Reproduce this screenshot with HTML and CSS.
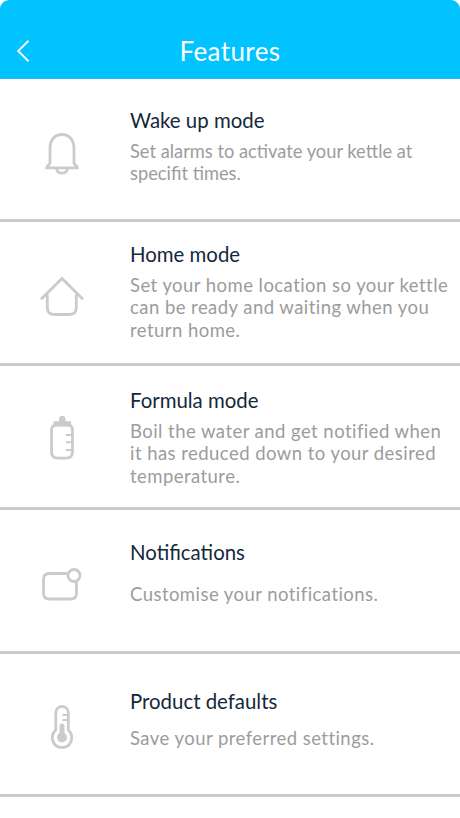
FILE: index.html
```html
<!DOCTYPE html>
<html lang="en">
<head>
<meta charset="utf-8">
<title>Features</title>
<link rel="stylesheet" href="styles.css">
</head>
<body>
<header class="bar">
  <svg class="back" width="14" height="24" viewBox="0 0 14 24"><path d="M12.5 1.8 2.2 12l10.3 10.2"/></svg>
  <h1>Features</h1>
</header>
<main>
  <section class="row wake">
    <svg class="icon" viewBox="0 0 70 70"><path d="M20 43V28c0-8 5-13.500 12-13.500s12 5.500 12 13.500v15c0 2.500 3.300 2 3.300 4.800H16.700c0-2.800 3.300-2.300 3.300-4.800zM26.500 49c1.500 5.600 9.500 5.600 11 0"/></svg>
    <div class="copy"><h2>Wake up mode</h2><p>Set alarms to activate your kettle at<br>specifit times.</p></div>
  </section>
  <section class="row home">
    <svg class="icon" viewBox="0 0 70 70"><path d="M11 34.300 32 13.500 53 34.300M17.300 29.500V42.500q0 7 7 7h15q7 0 7-7V29.500"/></svg>
    <div class="copy"><h2>Home mode</h2><p>Set your home location so your kettle<br>can be ready and waiting when you<br>return home.</p></div>
  </section>
  <section class="row formula">
    <svg class="icon" viewBox="0 0 70 70"><path d="M25 20h14.500q3 1.500 3 5v21.500q0 6.700-6.500 6.700h-8q-6.500 0-6.500-6.700V25q0-3.500 3.500-5z"/><path class="solid" d="M23.500 16.200h5.500v-2c0-4.500 6.500-4.500 6.500 0v2h5.500v5h-17.500z"/><path class="fine" d="M36 30h6M36 37.300h6M36 45h6"/></svg>
    <div class="copy"><h2>Formula mode</h2><p>Boil the water and get notified when<br>it has reduced down to your desired<br>temperature.</p></div>
  </section>
  <section class="row notifications">
    <svg class="icon" viewBox="0 0 70 70"><path d="M38 18.500H19.500q-6 0-6 6v13.500q0 6 6 6h21q6 0 6-6V27"/><circle cx="44" cy="20.500" r="6"/></svg>
    <div class="copy"><h2>Notifications</h2><p>Customise your notifications.</p></div>
  </section>
  <section class="row defaults">
    <svg class="icon" viewBox="0 0 70 70"><path d="M25.800 35V17.500c0-8 12.500-8 12.500 0v17.500c6.500 6 3.200 17.500-6.300 17.500s-12.800-11.500-6.200-17.500z"/><circle class="solid" cx="32" cy="42.500" r="5"/><path class="stem" d="M32 42V31"/><path class="fine" d="M32.500 20h5.500M32.500 25h5.500"/></svg>
    <div class="copy"><h2>Product defaults</h2><p>Save your preferred settings.</p></div>
  </section>
</main>
</body>
</html>
```
FILE: styles.css
```css
* { box-sizing: border-box; }
body { margin: 0; background: #fff; font-family: Lato, sans-serif; }
h1, h2, p { margin: 0; font-weight: 400; }
.bar {
  display: grid;
  grid-template-columns: 46px 1fr 46px;
  height: 79px;
  padding-top: 24px;
  align-items: center;
  background: #00c3ff;
  border-bottom: 1px solid #1fb9ec;
  border-radius: 9px 9px 0 0;
}
.bar h1 { color: #fff; font-size: 26px; line-height: 32px; letter-spacing: 0.4px; text-align: center; }
.back { margin-left: 16px; }
svg { fill: none; stroke: #cbcbcb; stroke-width: 2.8; }
.back { stroke: #e9faff; stroke-width: 2; }
.row { display: grid; grid-template-columns: 130px 1fr; height: 144px; border-bottom: 3px solid #cbcbcb; }
.icon { width: 70px; height: 70px; margin-left: 30px; }
.solid { fill: #cbcbcb; stroke: none; }
.fine { stroke-width: 2; }
.stem { stroke-width: 5; stroke-linecap: round; }
.copy { white-space: nowrap; }
h2 { color: #14283b; font-size: 20.4px; line-height: 26px; }
p { color: #9c9c9c; font-size: 18.5px; line-height: 22.400px; letter-spacing: 0.450px; margin-top: 7px; }
.wake { height: 143px; }
.wake .icon { margin-top: 41px; }
.wake .copy { padding-top: 28px; }
.wake p { font-size: 18.3px; letter-spacing: 0; }
.home .icon { margin-top: 43px; }
.home .copy { padding-top: 19px; }
.formula .icon { margin-top: 39px; }
.formula .copy { padding-top: 21px; }
.notifications .icon { margin-top: 45px; }
.notifications .copy { padding-top: 29px; }
.notifications p { margin-top: 18px; }
.notifications { height: 143.5px; }
.defaults { height: 143.5px; }
.defaults .icon { margin-top: 41.5px; }
.defaults .copy { padding-top: 34.500px; }
.defaults p { margin-top: 12.5px; }
```
